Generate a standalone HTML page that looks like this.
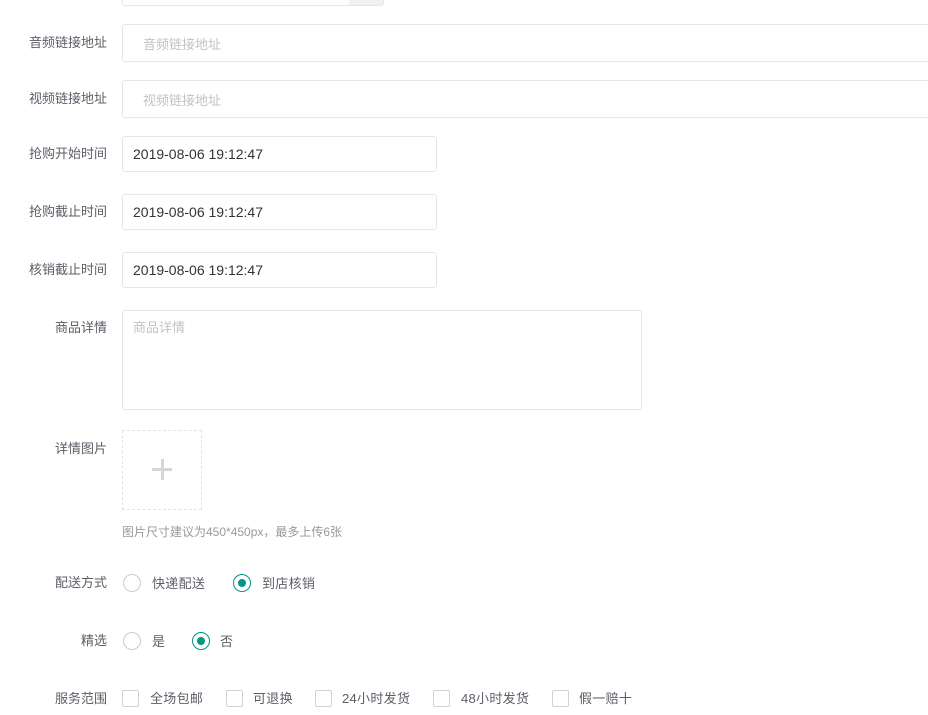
<!DOCTYPE html>
<html><head><meta charset="utf-8"><style>
body{margin:0;width:928px;height:715px;background:#fff;position:relative;overflow:hidden;font-family:"Liberation Sans","Noto Sans CJK SC",sans-serif;font-size:13px;color:#606266}
.a{position:absolute}
.lbl{position:absolute;right:821px;white-space:nowrap;line-height:16px;color:#5a5e66}
.inp{position:absolute;border:1px solid #e6e6e6;border-radius:3px;box-sizing:border-box;background:#fff}
.ph{position:absolute;color:#c2c2c2;white-space:nowrap}
.val{position:absolute;color:#333;font-size:14px;white-space:nowrap}
.r{position:absolute;width:18px;height:18px;border:1px solid #c9c9c9;border-radius:50%;box-sizing:border-box}
.r.on{border-color:#009688}
.r.on:after{content:"";position:absolute;left:4px;top:4px;width:8px;height:8px;border-radius:50%;background:#009688}
.cb{position:absolute;width:17px;height:17px;border:1px solid #d2d2d2;border-radius:2px;box-sizing:border-box}
.t{position:absolute;white-space:nowrap;line-height:16px;color:#5a5e66;letter-spacing:0.3px}
</style></head><body>
<div class="inp" style="left:122px;top:-32px;width:262px;height:38px;overflow:hidden"><div class="a" style="right:0;top:0;width:34px;height:38px;background:#f0f1f4"></div></div>

<div class="lbl" style="top:35px">音频链接地址</div>
<div class="inp" style="left:122px;top:24px;width:820px;height:38px"></div>
<div class="ph" style="left:143px;top:34px">音频链接地址</div>

<div class="lbl" style="top:91px">视频链接地址</div>
<div class="inp" style="left:122px;top:80px;width:820px;height:38px"></div>
<div class="ph" style="left:143px;top:90px">视频链接地址</div>

<div class="lbl" style="top:146px">抢购开始时间</div>
<div class="inp" style="left:122px;top:136px;width:315px;height:36px"></div>
<div class="val" style="left:133px;top:146px">2019-08-06 19:12:47</div>

<div class="lbl" style="top:204px">抢购截止时间</div>
<div class="inp" style="left:122px;top:194px;width:315px;height:36px"></div>
<div class="val" style="left:133px;top:204px">2019-08-06 19:12:47</div>

<div class="lbl" style="top:262px">核销截止时间</div>
<div class="inp" style="left:122px;top:252px;width:315px;height:36px"></div>
<div class="val" style="left:133px;top:262px">2019-08-06 19:12:47</div>

<div class="lbl" style="top:320px">商品详情</div>
<div class="inp" style="left:122px;top:310px;width:520px;height:100px"></div>
<div class="ph" style="left:133px;top:317px">商品详情</div>

<div class="lbl" style="top:441px">详情图片</div>
<div class="a" style="left:122px;top:430px;width:80px;height:80px;border:1px dashed #e2e2e2;box-sizing:border-box"></div>
<div class="a" style="left:152px;top:468px;width:20px;height:3px;background:#d6d6d6"></div>
<div class="a" style="left:160.5px;top:459px;width:3px;height:21px;background:#d6d6d6"></div>
<div class="a" style="left:122px;top:523px;font-size:12px;color:#999;white-space:nowrap">图片尺寸建议为450*450px，最多上传6张</div>

<div class="lbl" style="top:575px">配送方式</div>
<div class="r" style="left:123px;top:574px"></div><div class="t" style="left:152px;top:576px">快递配送</div>
<div class="r on" style="left:233px;top:574px"></div><div class="t" style="left:262px;top:576px">到店核销</div>

<div class="lbl" style="top:633px">精选</div>
<div class="r" style="left:123px;top:632px"></div><div class="t" style="left:152px;top:634px">是</div>
<div class="r on" style="left:192px;top:632px"></div><div class="t" style="left:220px;top:634px">否</div>

<div class="lbl" style="top:691px">服务范围</div>
<div class="cb" style="left:122px;top:690px"></div><div class="t" style="left:150px;top:691px">全场包邮</div>
<div class="cb" style="left:226px;top:690px"></div><div class="t" style="left:253px;top:691px">可退换</div>
<div class="cb" style="left:315px;top:690px"></div><div class="t" style="left:342px;top:691px">24小时发货</div>
<div class="cb" style="left:433px;top:690px"></div><div class="t" style="left:461px;top:691px">48小时发货</div>
<div class="cb" style="left:552px;top:690px"></div><div class="t" style="left:579px;top:691px">假一赔十</div>
</body></html>
